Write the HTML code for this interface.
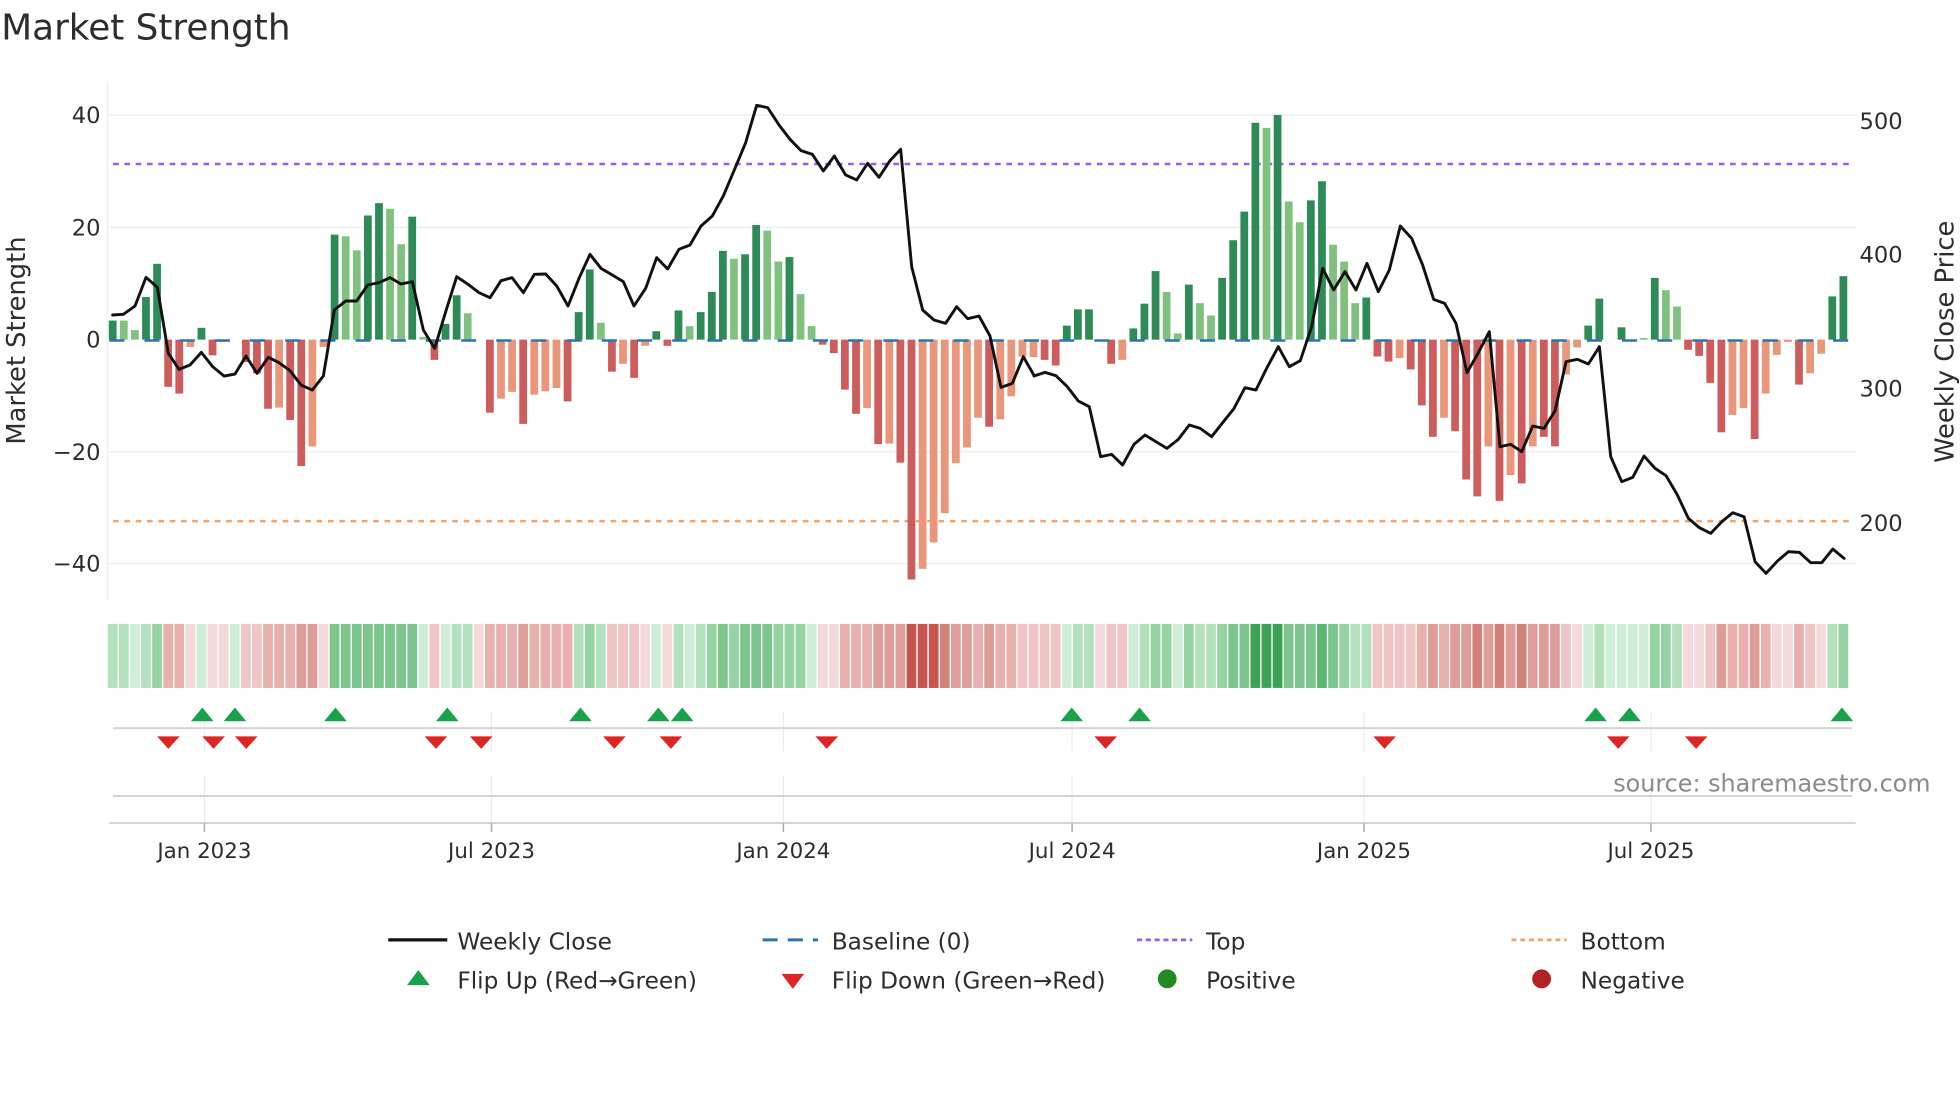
<!DOCTYPE html>
<html><head><meta charset="utf-8"><style>
html,body{margin:0;padding:0;background:#fff;}
svg{display:block;font-family:"DejaVu Sans","Liberation Sans",sans-serif;}
.D{fill:#2e8b57}.L{fill:#80c17f}.R{fill:#cd5c5c}.S{fill:#e9967a}
.g1{fill:#cfeed7}.g2{fill:#b3e1bd}.g3{fill:#95d3a3}.g4{fill:#7cc68d}.g5{fill:#5bb872}.g6{fill:#3ea256}
.r1{fill:#f4dada}.r2{fill:#efc6c5}.r3{fill:#e8b1af}.r4{fill:#de9d99}.r5{fill:#d3827b}.r6{fill:#c5554f}
.t{fill:#2d2d2d}
</style></head><body>
<svg width="1960" height="1102" viewBox="0 0 1560 877" preserveAspectRatio="none" xmlns="http://www.w3.org/2000/svg">
<rect width="1560" height="877" fill="#fff"/>
<text x="1" y="31.5" font-size="28.5" class="t">Market Strength</text>

<g stroke="#eef0f3" stroke-width="1.2">
<line x1="85" y1="91.5" x2="1478" y2="91.5"/>
<line x1="85" y1="181" x2="1478" y2="181"/>
<line x1="85" y1="359.5" x2="1478" y2="359.5"/>
<line x1="85" y1="448.5" x2="1478" y2="448.5"/>
<line x1="85.5" y1="65" x2="85.5" y2="478"/>
</g>

<g font-size="18" class="t" text-anchor="end">
<text x="80" y="98">40</text>
<text x="80" y="187.5">20</text>
<text x="80" y="276.5">0</text>
<text x="80" y="366">−20</text>
<text x="80" y="455">−40</text>
</g>
<g font-size="18" class="t">
<text x="1480" y="102.5">500</text>
<text x="1480" y="209">400</text>
<text x="1480" y="315.5">300</text>
<text x="1480" y="422.5">200</text>
</g>
<text transform="translate(20,271) rotate(-90)" text-anchor="middle" font-size="20.5" class="t">Market Strength</text>
<text transform="translate(1555,272) rotate(-90)" text-anchor="middle" font-size="20.5" class="t">Weekly Close Price</text>

<line x1="90" y1="130.5" x2="1476" y2="130.5" stroke="#9b5de5" stroke-width="2" stroke-dasharray="4.5,4.5"/>
<line x1="90" y1="414.7" x2="1476" y2="414.7" stroke="#f2a46a" stroke-width="2" stroke-dasharray="4.5,4.5"/>

<g transform="translate(89.7,270.3) scale(8.83,-4.47)">
<rect x="-.35" width=".7" y="0" height="3.4" class="D"/>
<rect x=".65" width=".7" y="0" height="3.4" class="L"/>
<rect x="1.65" width=".7" y="0" height="1.7" class="L"/>
<rect x="2.65" width=".7" y="0" height="7.6" class="D"/>
<rect x="3.65" width=".7" y="0" height="13.5" class="D"/>
<rect x="4.65" width=".7" y="-8.4" height="8.4" class="R"/>
<rect x="5.65" width=".7" y="-9.6" height="9.6" class="R"/>
<rect x="6.65" width=".7" y="-1.3" height="1.3" class="S"/>
<rect x="7.65" width=".7" y="0" height="2.1" class="D"/>
<rect x="8.65" width=".7" y="-2.8" height="2.8" class="R"/>
<rect x="9.65" width=".7" y="-.4" height=".4" class="S"/>
<rect x="11.65" width=".7" y="-4" height="4" class="R"/>
<rect x="12.65" width=".7" y="-6" height="6" class="R"/>
<rect x="13.65" width=".7" y="-12.3" height="12.3" class="R"/>
<rect x="14.65" width=".7" y="-12.1" height="12.1" class="S"/>
<rect x="15.65" width=".7" y="-14.3" height="14.3" class="R"/>
<rect x="16.65" width=".7" y="-22.5" height="22.5" class="R"/>
<rect x="17.65" width=".7" y="-19" height="19" class="S"/>
<rect x="18.65" width=".7" y="-1.3" height="1.3" class="S"/>
<rect x="19.65" width=".7" y="0" height="18.7" class="D"/>
<rect x="20.65" width=".7" y="0" height="18.4" class="L"/>
<rect x="21.65" width=".7" y="0" height="15.9" class="L"/>
<rect x="22.65" width=".7" y="0" height="22.1" class="D"/>
<rect x="23.65" width=".7" y="0" height="24.3" class="D"/>
<rect x="24.65" width=".7" y="0" height="23.3" class="L"/>
<rect x="25.65" width=".7" y="0" height="17" class="L"/>
<rect x="26.65" width=".7" y="0" height="21.9" class="D"/>
<rect x="27.65" width=".7" y="0" height=".5" class="L"/>
<rect x="28.65" width=".7" y="-3.6" height="3.6" class="R"/>
<rect x="29.65" width=".7" y="0" height="2.8" class="D"/>
<rect x="30.65" width=".7" y="0" height="7.9" class="D"/>
<rect x="31.65" width=".7" y="0" height="4.7" class="L"/>
<rect x="33.65" width=".7" y="-13" height="13" class="R"/>
<rect x="34.65" width=".7" y="-10.5" height="10.5" class="S"/>
<rect x="35.65" width=".7" y="-9.3" height="9.3" class="S"/>
<rect x="36.65" width=".7" y="-15" height="15" class="R"/>
<rect x="37.65" width=".7" y="-9.8" height="9.8" class="S"/>
<rect x="38.65" width=".7" y="-9.2" height="9.2" class="S"/>
<rect x="39.65" width=".7" y="-8.6" height="8.6" class="S"/>
<rect x="40.65" width=".7" y="-11" height="11" class="R"/>
<rect x="41.65" width=".7" y="0" height="4.9" class="D"/>
<rect x="42.65" width=".7" y="0" height="12.5" class="D"/>
<rect x="43.65" width=".7" y="0" height="3" class="L"/>
<rect x="44.65" width=".7" y="-5.7" height="5.7" class="R"/>
<rect x="45.65" width=".7" y="-4.3" height="4.3" class="S"/>
<rect x="46.65" width=".7" y="-6.8" height="6.8" class="R"/>
<rect x="47.65" width=".7" y="-1.1" height="1.1" class="S"/>
<rect x="48.65" width=".7" y="0" height="1.5" class="D"/>
<rect x="49.65" width=".7" y="-1.1" height="1.1" class="R"/>
<rect x="50.65" width=".7" y="0" height="5.2" class="D"/>
<rect x="51.65" width=".7" y="0" height="2.4" class="L"/>
<rect x="52.65" width=".7" y="0" height="4.9" class="D"/>
<rect x="53.65" width=".7" y="0" height="8.5" class="D"/>
<rect x="54.65" width=".7" y="0" height="15.8" class="D"/>
<rect x="55.65" width=".7" y="0" height="14.4" class="L"/>
<rect x="56.65" width=".7" y="0" height="15.2" class="D"/>
<rect x="57.65" width=".7" y="0" height="20.4" class="D"/>
<rect x="58.65" width=".7" y="0" height="19.4" class="L"/>
<rect x="59.65" width=".7" y="0" height="13.9" class="L"/>
<rect x="60.65" width=".7" y="0" height="14.7" class="D"/>
<rect x="61.65" width=".7" y="0" height="8.1" class="L"/>
<rect x="62.65" width=".7" y="0" height="2.4" class="L"/>
<rect x="63.65" width=".7" y="-.9" height=".9" class="R"/>
<rect x="64.65" width=".7" y="-2.4" height="2.4" class="R"/>
<rect x="65.65" width=".7" y="-8.9" height="8.9" class="R"/>
<rect x="66.65" width=".7" y="-13.2" height="13.2" class="R"/>
<rect x="67.65" width=".7" y="-12.2" height="12.2" class="S"/>
<rect x="68.65" width=".7" y="-18.6" height="18.6" class="R"/>
<rect x="69.65" width=".7" y="-18.5" height="18.5" class="S"/>
<rect x="70.65" width=".7" y="-21.9" height="21.9" class="R"/>
<rect x="71.65" width=".7" y="-42.7" height="42.7" class="R"/>
<rect x="72.65" width=".7" y="-40.8" height="40.8" class="S"/>
<rect x="73.65" width=".7" y="-36.1" height="36.1" class="S"/>
<rect x="74.65" width=".7" y="-30.9" height="30.9" class="S"/>
<rect x="75.65" width=".7" y="-22" height="22" class="S"/>
<rect x="76.65" width=".7" y="-19.2" height="19.2" class="S"/>
<rect x="77.65" width=".7" y="-13.9" height="13.9" class="S"/>
<rect x="78.65" width=".7" y="-15.5" height="15.5" class="R"/>
<rect x="79.65" width=".7" y="-14.2" height="14.2" class="S"/>
<rect x="80.65" width=".7" y="-10.1" height="10.1" class="S"/>
<rect x="81.65" width=".7" y="-3" height="3" class="S"/>
<rect x="82.65" width=".7" y="-3.1" height="3.1" class="S"/>
<rect x="83.65" width=".7" y="-3.6" height="3.6" class="R"/>
<rect x="84.65" width=".7" y="-4.6" height="4.6" class="R"/>
<rect x="85.65" width=".7" y="0" height="2.5" class="D"/>
<rect x="86.65" width=".7" y="0" height="5.4" class="D"/>
<rect x="87.65" width=".7" y="0" height="5.4" class="D"/>
<rect x="89.65" width=".7" y="-4.3" height="4.3" class="R"/>
<rect x="90.65" width=".7" y="-3.6" height="3.6" class="S"/>
<rect x="91.65" width=".7" y="0" height="2" class="D"/>
<rect x="92.65" width=".7" y="0" height="6.4" class="D"/>
<rect x="93.65" width=".7" y="0" height="12.2" class="D"/>
<rect x="94.65" width=".7" y="0" height="8.5" class="L"/>
<rect x="95.65" width=".7" y="0" height="1.1" class="L"/>
<rect x="96.65" width=".7" y="0" height="9.8" class="D"/>
<rect x="97.65" width=".7" y="0" height="6.5" class="L"/>
<rect x="98.65" width=".7" y="0" height="4.3" class="L"/>
<rect x="99.65" width=".7" y="0" height="11" class="D"/>
<rect x="100.65" width=".7" y="0" height="17.7" class="D"/>
<rect x="101.65" width=".7" y="0" height="22.8" class="D"/>
<rect x="102.65" width=".7" y="0" height="38.6" class="D"/>
<rect x="103.65" width=".7" y="0" height="37.7" class="L"/>
<rect x="104.65" width=".7" y="0" height="40" class="D"/>
<rect x="105.65" width=".7" y="0" height="24.6" class="L"/>
<rect x="106.65" width=".7" y="0" height="20.9" class="L"/>
<rect x="107.65" width=".7" y="0" height="24.8" class="D"/>
<rect x="108.65" width=".7" y="0" height="28.2" class="D"/>
<rect x="109.65" width=".7" y="0" height="16.9" class="L"/>
<rect x="110.65" width=".7" y="0" height="13.9" class="L"/>
<rect x="111.65" width=".7" y="0" height="6.5" class="L"/>
<rect x="112.65" width=".7" y="0" height="7.5" class="D"/>
<rect x="113.65" width=".7" y="-3" height="3" class="R"/>
<rect x="114.65" width=".7" y="-3.9" height="3.9" class="R"/>
<rect x="115.65" width=".7" y="-3.3" height="3.3" class="S"/>
<rect x="116.65" width=".7" y="-5.3" height="5.3" class="R"/>
<rect x="117.65" width=".7" y="-11.7" height="11.7" class="R"/>
<rect x="118.65" width=".7" y="-17.3" height="17.3" class="R"/>
<rect x="119.65" width=".7" y="-13.9" height="13.9" class="S"/>
<rect x="120.65" width=".7" y="-16.3" height="16.3" class="R"/>
<rect x="121.65" width=".7" y="-24.9" height="24.9" class="R"/>
<rect x="122.65" width=".7" y="-27.9" height="27.9" class="R"/>
<rect x="123.65" width=".7" y="-19" height="19" class="S"/>
<rect x="124.65" width=".7" y="-28.7" height="28.7" class="R"/>
<rect x="125.65" width=".7" y="-24.1" height="24.1" class="S"/>
<rect x="126.65" width=".7" y="-25.6" height="25.6" class="R"/>
<rect x="127.65" width=".7" y="-19" height="19" class="S"/>
<rect x="128.65" width=".7" y="-17.3" height="17.3" class="R"/>
<rect x="129.65" width=".7" y="-19" height="19" class="R"/>
<rect x="130.65" width=".7" y="-6.2" height="6.2" class="S"/>
<rect x="131.65" width=".7" y="-1.4" height="1.4" class="S"/>
<rect x="132.65" width=".7" y="0" height="2.5" class="D"/>
<rect x="133.65" width=".7" y="0" height="7.3" class="D"/>
<rect x="135.65" width=".7" y="0" height="2.2" class="D"/>
<rect x="137.65" width=".7" y="0" height=".3" class="L"/>
<rect x="138.65" width=".7" y="0" height="11" class="D"/>
<rect x="139.65" width=".7" y="0" height="8.8" class="L"/>
<rect x="140.65" width=".7" y="0" height="5.9" class="L"/>
<rect x="141.65" width=".7" y="-1.8" height="1.8" class="R"/>
<rect x="142.65" width=".7" y="-2.9" height="2.9" class="R"/>
<rect x="143.65" width=".7" y="-7.7" height="7.7" class="R"/>
<rect x="144.65" width=".7" y="-16.5" height="16.5" class="R"/>
<rect x="145.65" width=".7" y="-13.4" height="13.4" class="S"/>
<rect x="146.65" width=".7" y="-12.2" height="12.2" class="S"/>
<rect x="147.65" width=".7" y="-17.7" height="17.7" class="R"/>
<rect x="148.65" width=".7" y="-9.6" height="9.6" class="S"/>
<rect x="149.65" width=".7" y="-2.7" height="2.7" class="S"/>
<rect x="150.65" width=".7" y="-.4" height=".4" class="S"/>
<rect x="151.65" width=".7" y="-8" height="8" class="R"/>
<rect x="152.65" width=".7" y="-6" height="6" class="S"/>
<rect x="153.65" width=".7" y="-2.5" height="2.5" class="S"/>
<rect x="154.65" width=".7" y="0" height="7.7" class="D"/>
<rect x="155.65" width=".7" y="0" height="11.3" class="D"/>
</g>

<line x1="87" y1="271" x2="1476" y2="271" stroke="#2a76ad" stroke-width="2" stroke-dasharray="12,16"/>

<g fill="none" stroke="#111" stroke-width="8.7" stroke-linejoin="round" stroke-linecap="round">
<polyline transform="translate(79.6,71.6) scale(0.26532)" points="38,675 70,673 105,648 138,562 172,592 205,790 237,838 270,825 304,787 338,830 372,858 405,852 438,798 471,850 505,802 537,818 570,842 603,885 637,900 670,858 703,660 737,633 770,633 803,585 837,578 870,563 903,582 937,575 970,720 1004,775 1037,665 1070,560 1104,583 1137,608 1170,623 1203,572 1236,563 1270,608 1303,553 1337,552 1370,588 1404,648 1437,565"/>
<polyline transform="translate(445.7,71.6) scale(0.26532)" points="57,565 90,493 123,535 157,555 190,575 222,648 257,595 290,503 323,537 357,478 390,465 423,408 457,378 490,318 523,240 557,158 590,46 623,53 657,105 690,148 723,182 757,193 790,243 823,198 857,255 890,270 923,220 957,262 990,212 1022,178 1055,530 1088,660 1122,690 1157,700 1190,650 1223,686 1257,678 1290,738 1323,892 1357,880 1390,800 1423,858"/>
<polyline transform="translate(811.8,71.6) scale(0.26532)" points="42,858 75,847 108,857 142,890 175,933 208,950 242,1100 275,1093 308,1125 342,1063 375,1035 408,1055 441,1075 475,1048 508,1005 541,1015 575,1040 608,998 641,957 675,893 708,900 741,833 775,770 808,830 841,812 875,710 908,535 941,600 975,545 1008,600 1041,520 1075,605 1108,540 1141,408 1175,445 1208,525 1241,628 1274,640 1308,700 1341,848 1374,790 1408,725 1440,1070"/>
<polyline transform="translate(1178,71.6) scale(0.26532)" points="60,1070 92,1063 125,1085 158,1008 192,1015 225,962 258,815 292,808 325,822 358,770 392,1100 425,1175 458,1162 492,1098 525,1135 558,1157 592,1215 625,1285 658,1313 692,1330 725,1295 758,1268 792,1280 825,1415 858,1450 892,1413 925,1385 958,1387 992,1418 1025,1418 1058,1377 1092,1405"/>
</g>

<g transform="translate(89.7,496.5) scale(8.83,1)">
<rect x="-.44" width=".88" height="51" class="g2"/><rect x=".56" width=".88" height="51" class="g2"/><rect x="1.56" width=".88" height="51" class="g1"/><rect x="2.56" width=".88" height="51" class="g2"/><rect x="3.56" width=".88" height="51" class="g3"/><rect x="4.56" width=".88" height="51" class="r3"/><rect x="5.56" width=".88" height="51" class="r3"/><rect x="6.56" width=".88" height="51" class="r1"/><rect x="7.56" width=".88" height="51" class="g1"/><rect x="8.56" width=".88" height="51" class="r1"/><rect x="9.56" width=".88" height="51" class="r1"/><rect x="10.56" width=".88" height="51" class="g1"/><rect x="11.56" width=".88" height="51" class="r2"/><rect x="12.56" width=".88" height="51" class="r2"/><rect x="13.56" width=".88" height="51" class="r3"/><rect x="14.56" width=".88" height="51" class="r3"/><rect x="15.56" width=".88" height="51" class="r3"/><rect x="16.56" width=".88" height="51" class="r4"/><rect x="17.56" width=".88" height="51" class="r4"/><rect x="18.56" width=".88" height="51" class="r1"/>
<rect x="19.56" width=".88" height="51" class="g4"/><rect x="20.56" width=".88" height="51" class="g4"/><rect x="21.56" width=".88" height="51" class="g4"/><rect x="22.56" width=".88" height="51" class="g4"/><rect x="23.56" width=".88" height="51" class="g4"/><rect x="24.56" width=".88" height="51" class="g4"/><rect x="25.56" width=".88" height="51" class="g4"/><rect x="26.56" width=".88" height="51" class="g4"/><rect x="27.56" width=".88" height="51" class="g1"/><rect x="28.56" width=".88" height="51" class="r2"/><rect x="29.56" width=".88" height="51" class="g1"/><rect x="30.56" width=".88" height="51" class="g2"/><rect x="31.56" width=".88" height="51" class="g2"/><rect x="32.56" width=".88" height="51" class="r1"/><rect x="33.56" width=".88" height="51" class="r3"/><rect x="34.56" width=".88" height="51" class="r3"/><rect x="35.56" width=".88" height="51" class="r3"/><rect x="36.56" width=".88" height="51" class="r4"/><rect x="37.56" width=".88" height="51" class="r3"/><rect x="38.56" width=".88" height="51" class="r3"/>
<rect x="39.56" width=".88" height="51" class="r3"/><rect x="40.56" width=".88" height="51" class="r3"/><rect x="41.56" width=".88" height="51" class="g2"/><rect x="42.56" width=".88" height="51" class="g3"/><rect x="43.56" width=".88" height="51" class="g2"/><rect x="44.56" width=".88" height="51" class="r2"/><rect x="45.56" width=".88" height="51" class="r2"/><rect x="46.56" width=".88" height="51" class="r2"/><rect x="47.56" width=".88" height="51" class="r1"/><rect x="48.56" width=".88" height="51" class="g1"/><rect x="49.56" width=".88" height="51" class="r1"/><rect x="50.56" width=".88" height="51" class="g2"/><rect x="51.56" width=".88" height="51" class="g1"/><rect x="52.56" width=".88" height="51" class="g2"/><rect x="53.56" width=".88" height="51" class="g3"/><rect x="54.56" width=".88" height="51" class="g4"/><rect x="55.56" width=".88" height="51" class="g3"/><rect x="56.56" width=".88" height="51" class="g4"/><rect x="57.56" width=".88" height="51" class="g4"/><rect x="58.56" width=".88" height="51" class="g4"/>
<rect x="59.56" width=".88" height="51" class="g3"/><rect x="60.56" width=".88" height="51" class="g3"/><rect x="61.56" width=".88" height="51" class="g3"/><rect x="62.56" width=".88" height="51" class="g1"/><rect x="63.56" width=".88" height="51" class="r1"/><rect x="64.56" width=".88" height="51" class="r1"/><rect x="65.56" width=".88" height="51" class="r3"/><rect x="66.56" width=".88" height="51" class="r3"/><rect x="67.56" width=".88" height="51" class="r3"/><rect x="68.56" width=".88" height="51" class="r4"/><rect x="69.56" width=".88" height="51" class="r4"/><rect x="70.56" width=".88" height="51" class="r4"/><rect x="71.56" width=".88" height="51" class="r6"/><rect x="72.56" width=".88" height="51" class="r6"/><rect x="73.56" width=".88" height="51" class="r6"/><rect x="74.56" width=".88" height="51" class="r5"/><rect x="75.56" width=".88" height="51" class="r4"/><rect x="76.56" width=".88" height="51" class="r4"/><rect x="77.56" width=".88" height="51" class="r3"/><rect x="78.56" width=".88" height="51" class="r4"/>
<rect x="79.56" width=".88" height="51" class="r3"/><rect x="80.56" width=".88" height="51" class="r3"/><rect x="81.56" width=".88" height="51" class="r2"/><rect x="82.56" width=".88" height="51" class="r2"/><rect x="83.56" width=".88" height="51" class="r2"/><rect x="84.56" width=".88" height="51" class="r2"/><rect x="85.56" width=".88" height="51" class="g1"/><rect x="86.56" width=".88" height="51" class="g2"/><rect x="87.56" width=".88" height="51" class="g2"/><rect x="88.56" width=".88" height="51" class="r1"/><rect x="89.56" width=".88" height="51" class="r2"/><rect x="90.56" width=".88" height="51" class="r2"/><rect x="91.56" width=".88" height="51" class="g1"/><rect x="92.56" width=".88" height="51" class="g2"/><rect x="93.56" width=".88" height="51" class="g3"/><rect x="94.56" width=".88" height="51" class="g3"/><rect x="95.56" width=".88" height="51" class="g1"/><rect x="96.56" width=".88" height="51" class="g3"/><rect x="97.56" width=".88" height="51" class="g2"/><rect x="98.56" width=".88" height="51" class="g2"/>
<rect x="99.56" width=".88" height="51" class="g3"/><rect x="100.56" width=".88" height="51" class="g4"/><rect x="101.56" width=".88" height="51" class="g4"/><rect x="102.56" width=".88" height="51" class="g6"/><rect x="103.56" width=".88" height="51" class="g6"/><rect x="104.56" width=".88" height="51" class="g6"/><rect x="105.56" width=".88" height="51" class="g4"/><rect x="106.56" width=".88" height="51" class="g4"/><rect x="107.56" width=".88" height="51" class="g4"/><rect x="108.56" width=".88" height="51" class="g5"/><rect x="109.56" width=".88" height="51" class="g4"/><rect x="110.56" width=".88" height="51" class="g3"/><rect x="111.56" width=".88" height="51" class="g2"/><rect x="112.56" width=".88" height="51" class="g2"/><rect x="113.56" width=".88" height="51" class="r2"/><rect x="114.56" width=".88" height="51" class="r2"/><rect x="115.56" width=".88" height="51" class="r2"/><rect x="116.56" width=".88" height="51" class="r2"/><rect x="117.56" width=".88" height="51" class="r3"/><rect x="118.56" width=".88" height="51" class="r4"/>
<rect x="119.56" width=".88" height="51" class="r3"/><rect x="120.56" width=".88" height="51" class="r4"/><rect x="121.56" width=".88" height="51" class="r4"/><rect x="122.56" width=".88" height="51" class="r5"/><rect x="123.56" width=".88" height="51" class="r4"/><rect x="124.56" width=".88" height="51" class="r5"/><rect x="125.56" width=".88" height="51" class="r4"/><rect x="126.56" width=".88" height="51" class="r5"/><rect x="127.56" width=".88" height="51" class="r4"/><rect x="128.56" width=".88" height="51" class="r4"/><rect x="129.56" width=".88" height="51" class="r4"/><rect x="130.56" width=".88" height="51" class="r2"/><rect x="131.56" width=".88" height="51" class="r1"/><rect x="132.56" width=".88" height="51" class="g1"/><rect x="133.56" width=".88" height="51" class="g2"/><rect x="134.56" width=".88" height="51" class="g1"/><rect x="135.56" width=".88" height="51" class="g1"/><rect x="136.56" width=".88" height="51" class="g1"/><rect x="137.56" width=".88" height="51" class="g1"/><rect x="138.56" width=".88" height="51" class="g3"/>
<rect x="139.56" width=".88" height="51" class="g3"/><rect x="140.56" width=".88" height="51" class="g2"/><rect x="141.56" width=".88" height="51" class="r1"/><rect x="142.56" width=".88" height="51" class="r1"/><rect x="143.56" width=".88" height="51" class="r2"/><rect x="144.56" width=".88" height="51" class="r4"/><rect x="145.56" width=".88" height="51" class="r3"/><rect x="146.56" width=".88" height="51" class="r3"/><rect x="147.56" width=".88" height="51" class="r4"/><rect x="148.56" width=".88" height="51" class="r3"/><rect x="149.56" width=".88" height="51" class="r1"/><rect x="150.56" width=".88" height="51" class="r1"/><rect x="151.56" width=".88" height="51" class="r3"/><rect x="152.56" width=".88" height="51" class="r2"/><rect x="153.56" width=".88" height="51" class="r1"/><rect x="154.56" width=".88" height="51" class="g2"/><rect x="155.56" width=".88" height="51" class="g3"/>
</g>

<g stroke="#eaecef" stroke-width="1">
<line x1="162.7" y1="566" x2="162.7" y2="598"/><line x1="162.7" y1="617" x2="162.7" y2="655"/>
<line x1="391.2" y1="566" x2="391.2" y2="598"/><line x1="391.2" y1="617" x2="391.2" y2="655"/>
<line x1="623.5" y1="566" x2="623.5" y2="598"/><line x1="623.5" y1="617" x2="623.5" y2="655"/>
<line x1="853.3" y1="566" x2="853.3" y2="598"/><line x1="853.3" y1="617" x2="853.3" y2="655"/>
<line x1="1085.6" y1="566" x2="1085.6" y2="598"/><line x1="1085.6" y1="617" x2="1085.6" y2="655"/>
<line x1="1314" y1="566" x2="1314" y2="598"/><line x1="1314" y1="617" x2="1314" y2="655"/>
</g>
<g stroke="#d4d4d4" stroke-width="1.6">
<line x1="90" y1="579.5" x2="1474" y2="579.5"/>
<line x1="90" y1="633.5" x2="1474" y2="633.5"/>
<line x1="87" y1="655" x2="1477" y2="655"/>
</g>
<g stroke="#aaa" stroke-width="1.2">
<line x1="162.7" y1="655" x2="162.7" y2="662"/><line x1="391.2" y1="655" x2="391.2" y2="662"/><line x1="623.5" y1="655" x2="623.5" y2="662"/><line x1="853.3" y1="655" x2="853.3" y2="662"/><line x1="1085.6" y1="655" x2="1085.6" y2="662"/><line x1="1314" y1="655" x2="1314" y2="662"/>
</g>

<g fill="#16a34a">
<path d="M152 574 L161 563 L170 574Z"/><path d="M178 574 L187 563 L196 574Z"/><path d="M258 574 L267 563 L276 574Z"/><path d="M347 574 L356 563 L365 574Z"/><path d="M453 574 L462 563 L471 574Z"/><path d="M515 574 L524 563 L533 574Z"/><path d="M534 574 L543 563 L552 574Z"/><path d="M844 574 L853 563 L862 574Z"/><path d="M898 574 L907 563 L916 574Z"/><path d="M1261 574 L1270 563 L1279 574Z"/><path d="M1288 574 L1297 563 L1306 574Z"/><path d="M1457 574 L1466 563 L1475 574Z"/>
</g>
<g fill="#dc2626">
<path d="M125 586 L143 586 L134 596Z"/><path d="M161 586 L179 586 L170 596Z"/><path d="M187 586 L205 586 L196 596Z"/><path d="M338 586 L356 586 L347 596Z"/><path d="M374 586 L392 586 L383 596Z"/><path d="M480 586 L498 586 L489 596Z"/><path d="M525 586 L543 586 L534 596Z"/><path d="M649 586 L667 586 L658 596Z"/><path d="M871 586 L889 586 L880 596Z"/><path d="M1093 586 L1111 586 L1102 596Z"/><path d="M1279 586 L1297 586 L1288 596Z"/><path d="M1341 586 L1359 586 L1350 596Z"/>
</g>

<text x="1284" y="630" font-size="19" fill="#8a8a8a">source: sharemaestro.com</text>

<g font-size="17" class="t" text-anchor="middle">
<text x="162.7" y="683">Jan 2023</text>
<text x="391.2" y="683">Jul 2023</text>
<text x="623.5" y="683">Jan 2024</text>
<text x="853.3" y="683">Jul 2024</text>
<text x="1085.6" y="683">Jan 2025</text>
<text x="1314" y="683">Jul 2025</text>
</g>

<line x1="309" y1="748" x2="356" y2="748" stroke="#111" stroke-width="2.6"/>
<line x1="607" y1="748" x2="651" y2="748" stroke="#2a76ad" stroke-width="2.4" stroke-dasharray="12,8"/>
<line x1="905" y1="748" x2="949" y2="748" stroke="#9b5de5" stroke-width="2.2" stroke-dasharray="4,3"/>
<line x1="1203" y1="748" x2="1247" y2="748" stroke="#f2a46a" stroke-width="2.2" stroke-dasharray="4,3"/>
<path d="M324 784 L333 772 L342 784Z" fill="#16a34a"/>
<path d="M622 775 L640 775 L631 787Z" fill="#dc2626"/>
<circle cx="929" cy="779" r="7.5" fill="#228b22"/>
<circle cx="1227" cy="779" r="7.5" fill="#b22222"/>
<g font-size="18.5" class="t">
<text x="364" y="755.5">Weekly Close</text>
<text x="662" y="755.5">Baseline (0)</text>
<text x="960" y="755.5">Top</text>
<text x="1258" y="755.5">Bottom</text>
<text x="364" y="786.5">Flip Up (Red→Green)</text>
<text x="662" y="786.5">Flip Down (Green→Red)</text>
<text x="960" y="786.5">Positive</text>
<text x="1258" y="786.5">Negative</text>
</g>
</svg>
</body></html>
